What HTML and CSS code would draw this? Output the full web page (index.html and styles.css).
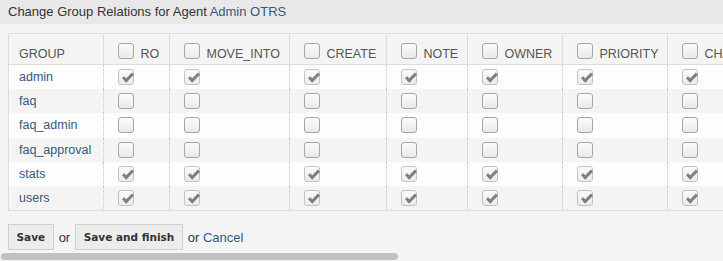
FILE: index.html
```html
<!DOCTYPE html>
<html lang="en">
<head>
    <meta charset="UTF-8">
    <title>Change Group Relations for Agent</title>
    <link rel="stylesheet" href="styles.css">
</head>
<body>
    <div class="page-header">
        <h2>Change Group Relations for Agent <a href="#">Admin OTRS</a></h2>
    </div>

    <div class="content">
        <table class="relations">
            <colgroup>
                <col class="col-group">
                <col class="col-ro">
                <col class="col-move">
                <col class="col-create">
                <col class="col-note">
                <col class="col-owner">
                <col class="col-priority">
                <col class="col-change">
                <col>
                <col>
            </colgroup>
            <thead>
                <tr>
                    <th>Group</th>
                    <th><label><input type="checkbox" class="cb"> ro</label></th>
                    <th><label><input type="checkbox" class="cb"> move_into</label></th>
                    <th><label><input type="checkbox" class="cb"> create</label></th>
                    <th><label><input type="checkbox" class="cb"> note</label></th>
                    <th><label><input type="checkbox" class="cb"> owner</label></th>
                    <th><label><input type="checkbox" class="cb"> priority</label></th>
                    <th><label><input type="checkbox" class="cb"> change_builder</label></th>
                    <th><label><input type="checkbox" class="cb"> change_manager</label></th>
                    <th><label><input type="checkbox" class="cb"> rw</label></th>
                </tr>
            </thead>
            <tbody id="rows"></tbody>
        </table>

        <div class="actions">
            <button type="button" class="btn">Save</button>
            <span class="or">or</span>
            <button type="button" class="btn">Save and finish</button>
            <span class="or">or <a href="#">Cancel</a></span>
        </div>

        <div class="scrollbar"><div class="thumb"></div></div>
    </div>

    <script>
        const groups = [
            { name: 'admin', checked: true },
            { name: 'faq', checked: false },
            { name: 'faq_admin', checked: false },
            { name: 'faq_approval', checked: false },
            { name: 'stats', checked: true },
            { name: 'users', checked: true }
        ];
        const permissionCount = 9;
        const tbody = document.getElementById('rows');

        groups.forEach((group) => {
            let cells = `<td><a href="#">${group.name}</a></td>`;
            for (let i = 0; i < permissionCount; i++) {
                cells += `<td><input type="checkbox" class="cb"${group.checked ? ' checked' : ''}></td>`;
            }
            tbody.insertAdjacentHTML('beforeend', `<tr>${cells}</tr>`);
        });
    </script>
</body>
</html>
```

FILE: styles.css
```css
* {
    margin: 0;
    padding: 0;
    box-sizing: border-box;
}

body {
    font-family: 'Liberation Sans', Arial, sans-serif;
    font-size: 13px;
    color: #333;
    background: #f4f4f4;
    overflow: hidden;
}

a {
    color: #35597c;
    text-decoration: none;
}

.page-header {
    background: #e8e8e8;
    height: 24px;
    padding: 0 8px;
}

.page-header h2 {
    font-size: 13px;
    font-weight: normal;
    line-height: 24px;
    color: #333;
}

.content {
    padding: 9px 8px 0;
    overflow: hidden;
}

.relations {
    table-layout: fixed;
    width: 1300px;
    border-collapse: collapse;
    border: 1px solid #dcdcdc;
}

.col-group { width: 95px; }
.col-ro { width: 66px; }
.col-move { width: 120px; }
.col-create { width: 97px; }
.col-note { width: 81px; }
.col-owner { width: 95px; }
.col-priority { width: 105px; }
.col-change { width: 160px; }

.relations th {
    text-align: left;
    font-weight: normal;
    font-size: 12.5px;
    text-transform: uppercase;
    color: #555;
    white-space: nowrap;
    overflow: hidden;
    padding: 9px 10px 1px;
    line-height: 18px;
    vertical-align: bottom;
    border-left: 1px solid #dcdcdc;
    border-bottom: 1px solid #dcdcdc;
}

.relations td {
    height: 24.4px;
    padding: 0 10px;
    font-size: 12.5px;
    vertical-align: middle;
    border-left: 1px dotted #c4c4c4;
    white-space: nowrap;
}

.relations tbody tr:nth-child(odd) {
    background: #fdfdfd;
}

.relations tbody tr:nth-child(even) {
    background: #f4f4f4;
}

.cb {
    appearance: none;
    -webkit-appearance: none;
    position: relative;
    display: inline-block;
    width: 16px;
    height: 16px;
    margin: 0 3px 0 4px;
    vertical-align: -1px;
    border: 1px solid #a6a6a6;
    border-radius: 3px;
    background: linear-gradient(#fbfbfb, #e9e9e9);
}

.relations td .cb {
    vertical-align: middle;
}

.cb:checked {
    border-color: #c2c2c2;
    background: linear-gradient(#fafafa, #ececec);
}

.cb:checked::after {
    content: '';
    position: absolute;
    left: 6px;
    top: 1px;
    width: 3px;
    height: 8px;
    border: solid #7f7f7f;
    border-width: 0 3px 3px 0;
    transform: rotate(45deg);
}

.actions {
    margin-top: 13px;
    display: flex;
    align-items: center;
    height: 26px;
}

.btn {
    font-family: 'DejaVu Sans', sans-serif;
    font-weight: bold;
    font-size: 10.5px;
    color: #333;
    background: #ececec;
    border: 1px solid #cfcfcf;
    height: 26px;
    padding: 0 7.5px;
    cursor: pointer;
}

.or {
    margin: 0 5px;
    font-size: 13px;
}

.scrollbar {
    margin: 3px -8px 0;
    height: 8px;
}

.scrollbar .thumb {
    width: 397px;
    height: 7px;
    margin-left: 1px;
    background: #c1c1c1;
    border-radius: 4px;
}
```
